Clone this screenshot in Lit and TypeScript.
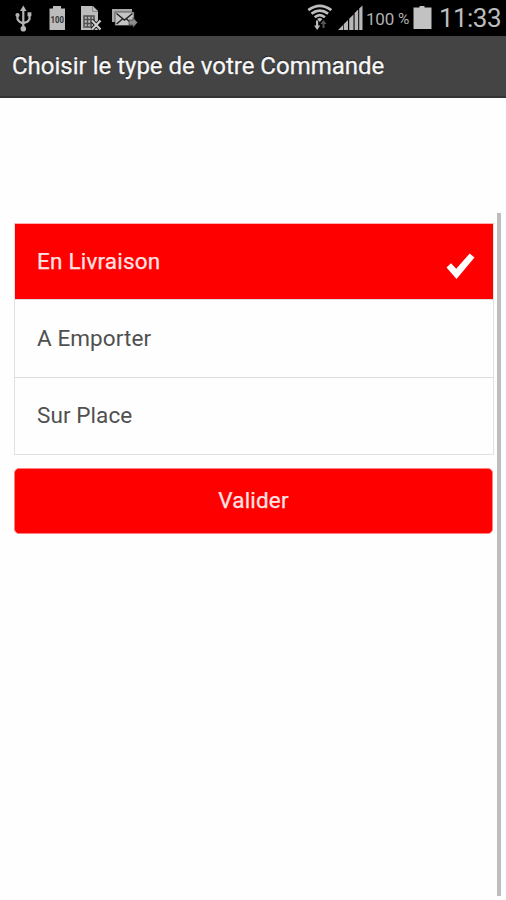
import { LitElement, html, css } from "lit";
import { customElement, property, state } from "lit/decorators.js";
import { classMap } from "lit/directives/class-map.js";

@customElement("status-bar")
class StatusBar extends LitElement {
  static styles = css`
    :host {
      display: flex;
      align-items: flex-start;
      justify-content: space-between;
      height: 36px;
      background: #000;
      font-family: Roboto, sans-serif;
    }
    svg {
      display: block;
      height: 36px;
      flex: none;
    }
    .right {
      display: flex;
    }
    .percent {
      display: flex;
      gap: 4px;
      width: 47px;
      font-size: 17px;
      line-height: 38px;
      letter-spacing: -0.2px;
      white-space: nowrap;
      color: #b0b0b0;
    }
    .sign {
      font-size: 15.5px;
      line-height: 39px;
    }
    .clock {
      width: 67px;
      font-size: 26px;
      line-height: 36px;
      letter-spacing: -0.55px;
      color: #bcbcbc;
    }
    .tiny {
      font: bold 9px Roboto, sans-serif;
    }
  `;

  render() {
    return html`
      <svg width="150" height="36" viewBox="0 0 150 36">
        <g stroke="#b4b4b4" stroke-width="2.2" fill="none">
          <path d="M23.3 9V29M17.5 15v4.2l1.7 2.3 4.1 2.3M29.5 14v5.2l-1.8 2.3-4.4 1.8" />
        </g>
        <path d="M20 11 23.3 5.6 26.6 11Z" fill="#b4b4b4" />
        <circle cx="23.3" cy="28.7" r="2.8" fill="#b4b4b4" />
        <circle cx="17.5" cy="15" r="2.1" fill="#b4b4b4" />
        <rect x="27.5" y="12.3" width="3.9" height="4" fill="#b4b4b4" />
        <path d="M53 6h8v2.5h4V30H49.500V8.500H53Z" fill="#bdbdbd" />
        <text class="tiny" x="50.5" y="22.5" textLength="13.5" lengthAdjust="spacingAndGlyphs" fill="#333">100</text>
        <path d="M81 6h12l5 5v19H81Z" fill="#bdbdbd" />
        <path d="M92.5 6v5.5H98" fill="none" stroke="#888" />
        <path d="M84 16h10v11H84ZM84 19.500h10M84 23.500h10M87.500 16v11M91 16v11" fill="none" stroke="#505050" stroke-width="1.5" />
        <path d="m92 20.500 8.500 9M100.500 20.500l-8.500 9" stroke="#111" stroke-width="4" />
        <path d="m92 20.500 8.500 9M100.500 20.500l-8.500 9" stroke="#d0d0d0" stroke-width="2.1" />
        <path d="M112 9h20v3h-17v10h-3Z" fill="#aaa" />
        <rect x="115" y="12" width="19" height="13.5" fill="#c4c4c4" stroke="#333" stroke-width=".7" />
        <path d="m116.500 13.500 8 6.500 8-6.500M116.500 24l6-5M132.500 24l-6-5" fill="none" stroke="#222" stroke-width="1.4" />
        <path d="M129 20h4v-2.500l4.500 5-4.500 5V25h-4Z" fill="#8c8c8c" stroke="#333" stroke-width=".6" />
      </svg>
      <div class="right">
        <svg width="66" height="36" viewBox="300 0 66 36">
          <g fill="none" stroke="#bdbdbd" stroke-width="2.7">
            <path d="M308.300 10.200Q319.800 1.600 331.300 10.200" />
            <path d="M311.500 13.700Q319.800 7.400 328.100 13.700" />
            <path d="M314.700 17.200Q319.800 12.900 324.900 17.200" />
          </g>
          <path d="M317.200 18.900Q319.800 17 322.400 18.900L319.800 22Z" fill="#bdbdbd" />
          <path d="M316 20.500h2.200v5h2L317.100 30l-3-4.500h1.900Z" fill="#bdbdbd" />
          <path d="M322.500 28v-4h-2l3-4 3 4h-2v4Z" fill="#555" />
          <path d="M338 30l5-5v5ZM343.700 24.200l4.300-4.200v10h-4.300ZM349.200 18.800l4.300-4.300V30h-4.300ZM354.600 13l3.600-3.600V30h-3.600ZM359.200 8.400l3.300-2.900V30h-3.300Z" fill="#b7b7b7" />
        </svg>
        <div class="percent"><span>100</span><span class="sign">%</span></div>
        <svg width="26" height="36" viewBox="0 0 26 36">
          <path d="M6.500 6h5v1.500h7V29h-18V7.500h6Z" fill="#c2c2c2" />
        </svg>
        <div class="clock">11:33</div>
      </div>
    `;
  }
}

@customElement("order-option")
class OrderOption extends LitElement {
  @property() label = "";
  @property({ type: Boolean }) selected = false;

  static styles = css`
    :host {
      display: block;
    }
    .row {
      display: flex;
      align-items: center;
      justify-content: space-between;
      box-sizing: border-box;
      height: 77px;
      padding: 0 18px 0 22px;
      color: #505050;
      font-size: 22.5px;
      letter-spacing: 0.08px;
    }
    :host(:last-child) .row {
      height: 76px;
    }
    .row.selected {
      height: 75px;
      background: #f00;
      color: #ffe3e3;
      letter-spacing: 0.2px;
      -webkit-text-stroke: 0.25px #ffe3e3;
    }
    .label {
      margin-top: -2px;
    }
    svg {
      margin-top: 9px;
    }
  `;

  render() {
    return html`
      <div class=${classMap({ row: true, selected: this.selected })}>
        <span class="label">${this.label}</span>
        ${this.selected
          ? html`<svg width="29" height="27" viewBox="0 0 29 27">
              <path d="M.5 14.500 5 10.200 10.200 15.700 23.700.5 28.500 4.500 10.500 26Z" fill="#fff" />
            </svg>`
          : ""}
      </div>
    `;
  }
}

@customElement("app-root")
class AppRoot extends LitElement {
  @state() private selected = 0;
  private options = ["En Livraison", "A Emporter", "Sur Place"];

  static styles = css`
    :host {
      display: flex;
      flex-direction: column;
      height: 900px;
      background: #fefefe;
      font-family: Roboto, sans-serif;
    }
    .title {
      box-sizing: border-box;
      height: 62px;
      padding-left: 12px;
      background: #444;
      border-bottom: 2px solid #343434;
      color: #f8f8f8;
      font-size: 24px;
      line-height: 60px;
      text-shadow: 0 -1px 1px #111;
      -webkit-text-stroke: 0.3px #f8f8f8;
      white-space: nowrap;
    }
    .content {
      display: flex;
      flex: 1;
      margin-top: 115px;
      margin-bottom: 4px;
    }
    .form {
      flex: 1;
      padding: 10px 3px 0 14px;
    }
    .list {
      border: 1px solid #e2e2e2;
      border-top-color: #ffb0b0;
      display: flex;
      flex-direction: column;
    }
    .list > * + * {
      border-top: 1px solid #dcdcdc;
    }
    .submit {
      display: block;
      box-sizing: border-box;
      width: 479px;
      height: 66px;
      margin: 13px 0 0;
      padding: 0 0 2px;
      border: 1px solid #ff8080;
      border-radius: 5px;
      background: #f00;
      color: #ffe3e3;
      font: 22.5px Roboto, sans-serif;
      letter-spacing: 0.2px;
      -webkit-text-stroke: 0.25px #ffe3e3;
    }
    .scrollbar {
      width: 4px;
      margin-right: 5px;
      background: #bdbdbd;
    }
  `;

  render() {
    return html`
      <status-bar></status-bar>
      <div class="title">Choisir le type de votre Commande</div>
      <div class="content">
        <div class="form">
          <div class="list">
            ${this.options.map(
              (o, i) => html`<order-option
                .label=${o}
                .selected=${i === this.selected}
                @click=${() => (this.selected = i)}
              ></order-option>`
            )}
          </div>
          <button class="submit">Valider</button>
        </div>
        <div class="scrollbar"></div>
      </div>
    `;
  }
}
